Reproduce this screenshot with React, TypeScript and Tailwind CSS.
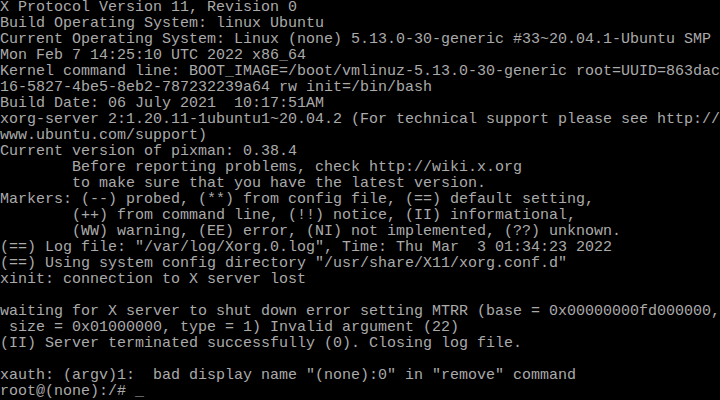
const lines = [
  'X Protocol Version 11, Revision 0',
  'Build Operating System: linux Ubuntu',
  'Current Operating System: Linux (none) 5.13.0-30-generic #33~20.04.1-Ubuntu SMP',
  'Mon Feb 7 14:25:10 UTC 2022 x86_64',
  'Kernel command line: BOOT_IMAGE=/boot/vmlinuz-5.13.0-30-generic root=UUID=863dac',
  '16-5827-4be5-8eb2-787232239a64 rw init=/bin/bash',
  'Build Date: 06 July 2021  10:17:51AM',
  'xorg-server 2:1.20.11-1ubuntu1~20.04.2 (For technical support please see http://',
  'www.ubuntu.com/support)',
  'Current version of pixman: 0.38.4',
  '        Before reporting problems, check http://wiki.x.org',
  '        to make sure that you have the latest version.',
  'Markers: (--) probed, (**) from config file, (==) default setting,',
  '        (++) from command line, (!!) notice, (II) informational,',
  '        (WW) warning, (EE) error, (NI) not implemented, (??) unknown.',
  '(==) Log file: "/var/log/Xorg.0.log", Time: Thu Mar  3 01:34:23 2022',
  '(==) Using system config directory "/usr/share/X11/xorg.conf.d"',
  'xinit: connection to X server lost',
  '',
  'waiting for X server to shut down error setting MTRR (base = 0x00000000fd000000,',
  ' size = 0x01000000, type = 1) Invalid argument (22)',
  '(II) Server terminated successfully (0). Closing log file.',
  '',
  'xauth: (argv)1:  bad display name "(none):0" in "remove" command',
  'root@(none):/# _',
]

export default function App() {
  return (
    <div className="w-[720px] h-[400px] overflow-hidden bg-black">
      {/* VGA text console, 80x25 */}
      <pre className="m-0 font-['Liberation_Mono',monospace] text-[15px] leading-[16px] text-[#aaaaaa] whitespace-pre">
        {lines.map((l, i) => (
          <div key={i} className="h-4">
            {l}
          </div>
        ))}
      </pre>
    </div>
  )
}
